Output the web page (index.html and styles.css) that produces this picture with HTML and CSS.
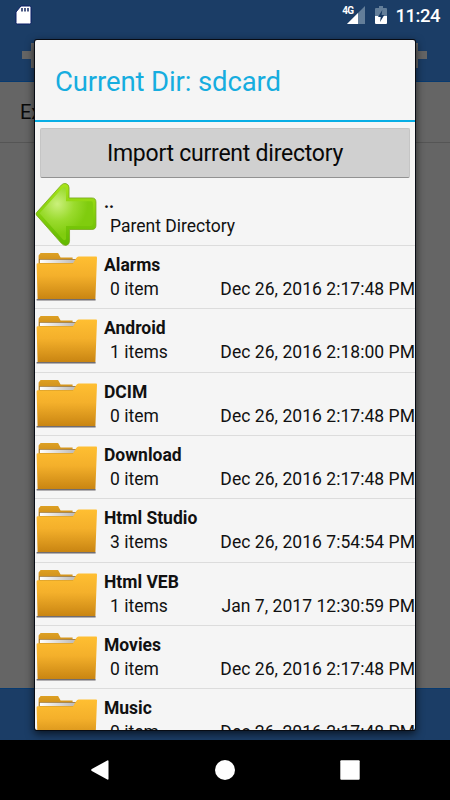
FILE: index.html
```html
<!DOCTYPE html>
<html lang="en">
<head>
<meta charset="utf-8">
<title>Import directory</title>
<link rel="stylesheet" href="styles.css">
</head>
<body>
<svg class="defs" aria-hidden="true">
  <defs>
    <linearGradient id="front" x1="0" y1="0" x2="0" y2="1"><stop offset="0" stop-color="#ffbf32"/><stop offset=".45" stop-color="#f4b02b"/><stop offset="1" stop-color="#c98512"/></linearGradient>
    <linearGradient id="back" x1="0" y1="0" x2="0" y2="1"><stop offset="0" stop-color="#dda023"/><stop offset="1" stop-color="#ca8818"/></linearGradient>
    <linearGradient id="paper" x1="0" y1="0" x2="1" y2="0"><stop offset="0" stop-color="#fff"/><stop offset="1" stop-color="#bbb8b5"/></linearGradient>
    <radialGradient id="green" gradientUnits="userSpaceOnUse" cx="23" cy="23" r="30"><stop offset="0" stop-color="#cbf07c"/><stop offset=".55" stop-color="#9adb2d"/><stop offset="1" stop-color="#80cc0e"/></radialGradient>
    <linearGradient id="rim" x1="0" y1="0" x2="0" y2="1"><stop offset="0" stop-color="#a8e51a"/><stop offset="1" stop-color="#60b800"/></linearGradient>
    <symbol id="folder" viewBox="0.4 0 64 63">
      <path d="M2 53h59v1.400H2z" fill="#716d70"/>
      <path d="M4 14V9.500l2-2.500h17.500l2.500 4.500H38v8H4z" fill="url(#back)"/>
      <path d="M4.500 13h37v7h-37z" fill="#9b7028"/>
      <path d="M5.200 13.700H41.200l-1.500 3.300H5.200z" fill="url(#paper)"/>
      <path d="M2 18.500q0-1.200 1.200-1.200h35.300l3.200-5.300q.8-1.500 2.300-1.500h17.500q1 0 .9 1.200L60.800 53H3z" fill="url(#front)"/>
    </symbol>
  </defs>
</svg>
<div class="screen">
  <header class="appbar">
    <div class="status">
      <svg class="sd" viewBox="0 0 18 22"><path d="M7 2h8.500Q17 2 17 3.500v15q0 1.500-1.500 1.500h-12Q2 20 2 18.500V8z" fill="#fff" stroke="#0b1d66"/><path d="M8 4v3.500M11 4v3.500M14 4v3.500" stroke="#10255d" stroke-width="1.500"/></svg>
      <span class="net">4G</span>
      <svg class="signal" viewBox="0 0 18 18"><path d="M18 0v18H0z" fill="#637e99"/><path d="M11 7v11H0z" fill="#fff"/></svg>
      <svg class="battery" viewBox="0 0 12 18"><path d="M4 0h4v2h3q1 0 1 1v7H0V3q0-1 1-1h3z" fill="#637e99"/><path d="M0 10h12v7q0 1-1 1H1q-1 0-1-1z" fill="#fff"/><path d="M7.300 4 3 11h2.700L5 16l4.300-7H6.600z" fill="#173963"/></svg>
      <span class="clock">11:24</span>
    </div>
    <div class="actions"><i class="plus"></i><i class="plus"></i></div>
  </header>
  <main class="page"><div class="page-row">Examples</div></main>
  <div class="bottombar"></div>
  <nav class="navbar">
    <svg viewBox="0 0 20 20"><path d="M17.500 1v18q-.2 1-1.200.5L.8 11q-1.300-1 0-2L16.300.5q1-.5 1.200.5z" fill="#fff"/></svg>
    <svg viewBox="0 0 20 20"><circle cx="10" cy="10" r="10" fill="#fff"/></svg>
    <svg viewBox="0 0 20 20"><rect x=".3" y=".3" width="19.400" height="19.400" rx="1" fill="#fff"/></svg>
  </nav>
</div>
<section class="dialog">
  <h1 class="title"><span>Current Dir: sdcard</span></h1>
  <button class="import"><span>Import current directory</span></button>
  <ul class="list">
    <li class="row parent">
      <svg class="icon" viewBox="1 2.6 63 61.500" preserveAspectRatio="none"><path d="M2.500 31.500 27 4.500q2-2 4.500-1.300 3 1 3 4V17.200h22.500q4 0 4 4v22.800q0 4-4 4H35v11q0 4-3.500 4.500-2.500.2-4.500-2L2.500 34q-1-1.200 0-2.500z" fill="url(#rim)" stroke="#79a81c" stroke-width=".8"/><path d="M5.500 32.200 28 7.500q3-2 3.500 1.500v11.500h25q1.500 0 1.500 2v20q0 2-2 2H31.500v12.500q-.5 2.500-3 .7z" fill="url(#green)"/></svg>
      <div class="text"><b>..</b><div class="meta"><span>Parent Directory</span></div></div>
    </li>
    <li class="row"><svg class="icon"><use href="#folder"/></svg><div class="text"><b>Alarms</b><div class="meta"><span>0 item</span><time>Dec 26, 2016 2:17:48 PM</time></div></div></li>
    <li class="row"><svg class="icon"><use href="#folder"/></svg><div class="text"><b>Android</b><div class="meta"><span>1 items</span><time>Dec 26, 2016 2:18:00 PM</time></div></div></li>
    <li class="row"><svg class="icon"><use href="#folder"/></svg><div class="text"><b>DCIM</b><div class="meta"><span>0 item</span><time>Dec 26, 2016 2:17:48 PM</time></div></div></li>
    <li class="row"><svg class="icon"><use href="#folder"/></svg><div class="text"><b>Download</b><div class="meta"><span>0 item</span><time>Dec 26, 2016 2:17:48 PM</time></div></div></li>
    <li class="row"><svg class="icon"><use href="#folder"/></svg><div class="text"><b>Html Studio</b><div class="meta"><span>3 items</span><time>Dec 26, 2016 7:54:54 PM</time></div></div></li>
    <li class="row"><svg class="icon"><use href="#folder"/></svg><div class="text"><b>Html VEB</b><div class="meta"><span>1 items</span><time>Jan 7, 2017 12:30:59 PM</time></div></div></li>
    <li class="row"><svg class="icon"><use href="#folder"/></svg><div class="text"><b>Movies</b><div class="meta"><span>0 item</span><time>Dec 26, 2016 2:17:48 PM</time></div></div></li>
    <li class="row"><svg class="icon"><use href="#folder"/></svg><div class="text"><b>Music</b><div class="meta"><span>0 item</span><time>Dec 26, 2016 2:17:48 PM</time></div></div></li>
  </ul>
</section>
</body>
</html>
```
FILE: styles.css
```css
* { box-sizing: border-box; }
body { margin: 0; width: 450px; height: 800px; overflow: hidden; position: relative; font-family: Roboto, sans-serif; color: #111; }
.defs { position: absolute; width: 0; height: 0; }
.screen { display: flex; flex-direction: column; height: 800px; background: #656565; }
.appbar { height: 82px; background: #1b3d66; border-bottom: 1px solid #073a70; }
.status { display: flex; align-items: center; height: 30px; padding: 0 10px 0 14px; color: #fff; }
.sd { width: 18px; height: 22px; }
.net { margin-left: auto; margin-top: -9px; font-size: 10px; line-height: 12px; font-weight: 700; letter-spacing: -.6px; }
.signal { width: 18px; height: 18px; margin-left: -7px; margin-right: 10px; }
.battery { width: 12px; height: 18px; margin-right: 9px; }
.clock { font-size: 18.500px; font-weight: 500; line-height: 30px; padding-top: 2px; letter-spacing: -.5px; }
.actions { display: flex; justify-content: space-between; padding: 13px 23px 0 22px; }
.plus { width: 25px; height: 25px; background: linear-gradient(#656565, #656565) 0 8px / 25px 8px no-repeat, linear-gradient(#656565, #656565) 50% 0 / 7px 25px no-repeat; }
.page { flex: 1; }
.page-row { height: 61px; padding-left: 20px; border-bottom: 1px solid #555; font-size: 20px; line-height: 61px; color: #090909; }
.bottombar { height: 52px; background: #1b3d66; border-top: 1px solid #073a70; }
.navbar { height: 60px; background: #000; display: flex; justify-content: space-between; align-items: center; padding: 0 90px; }
.navbar svg { width: 20px; height: 20px; }
.navbar svg:first-child { transform: translateX(1px); }
.dialog { position: absolute; left: 35px; top: 40px; width: 380px; height: 690px; overflow: hidden; background: #f5f5f5; border-radius: 2px; box-shadow: 0 0 0 1px #080c14, 0 3px 8px 1px rgba(0,0,0,.65); }
.title { margin: 0; height: 82px; padding: 0 20px; border-bottom: 2px solid #08aee5; font-size: 27.500px; line-height: 83px; font-weight: 400; color: #16addf; white-space: nowrap; letter-spacing: -.12px; }
.import { display: block; width: 370px; height: 50px; margin: 6px 5px 4.670px; padding: 1px 0 0; border: 1px solid #c5c5c5; border-bottom: 1px solid #929292; border-radius: 2px; background: #d0d0d0; font: 23px/47px Roboto, sans-serif; letter-spacing: -.24px; color: #080808; }
.list { margin: 0; padding: 0; list-style: none; }
.row { display: flex; height: 63.330px; border-bottom: 1px solid #dcdcdc; }
.icon { width: 64px; height: 63px; flex: none; }
.text { flex: 1; margin-left: 5px; padding-top: 7px; font-size: 17.500px; line-height: 24px; }
.text b { display: block; font-weight: 700; }
.meta { display: flex; justify-content: space-between; padding-left: 6px; white-space: nowrap; }
.meta time { letter-spacing: .04px; }
```
